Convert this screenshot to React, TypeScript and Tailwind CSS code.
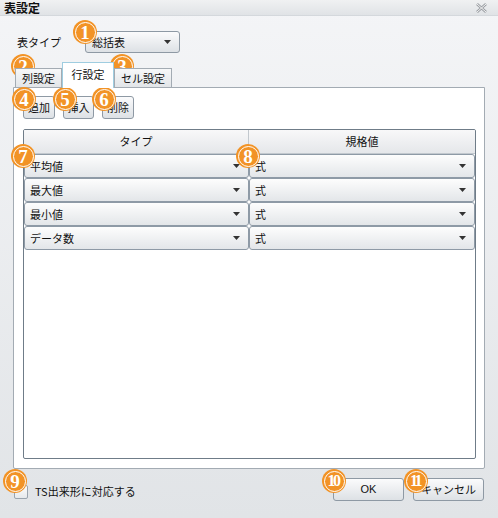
import React from "react";

const FONT = { fontFamily: '"Noto Sans CJK JP", "Noto Sans", sans-serif' };

function Badge({ n, x, y }: { n: string; x: number; y: number }) {
  const two = n.length > 1;
  return (
    <div
      className="absolute w-[24px] h-[24px] rounded-full bg-[#f29326] flex items-center justify-center"
      style={{ left: x - 12, top: y - 12 }}
    >
      <div className="w-[21px] h-[21px] rounded-full border-[1.5px] border-white bg-[#f29326] flex items-center justify-center">
        <span
          className={`text-white font-bold leading-none ${two ? "text-[16px] tracking-[-2.5px] -ml-[2px]" : "text-[19px]"}`}
          style={{ fontFamily: '"Liberation Serif", serif' }}
        >
          {n}
        </span>
      </div>
    </div>
  );
}

function Arrow() {
  return (
    <svg width="7" height="4" viewBox="0 0 7 4" className="shrink-0">
      <path d="M0 0 L7 0 L3.5 4 Z" fill="#333" />
    </svg>
  );
}

function Combo({ text }: { text: string }) {
  return (
    <div className="h-[24px] flex-1 rounded-[3px] border border-[#8e9aa6] bg-gradient-to-b from-[#fdfdfd] to-[#e3e6e9] flex items-center justify-between pl-[5px] pr-[8px] text-[11px] text-[#111]">
      <span>{text}</span>
      <Arrow />
    </div>
  );
}

function Btn({ children, w }: { children: React.ReactNode; w: string }) {
  return (
    <div
      className={`${w} h-[23px] rounded-[3px] border border-[#8e99a4] bg-gradient-to-b from-[#fbfbfc] to-[#dde1e5] flex items-center justify-center text-[11px] text-[#111]`}
    >
      {children}
    </div>
  );
}

export default function App() {
  const rows = ["平均値", "最大値", "最小値", "データ数"];
  return (
    <div
      className="relative w-[498px] h-[518px] overflow-hidden bg-gradient-to-b from-[#f4f5f7] to-[#e1e4e7] text-[#111] flex flex-col"
      style={FONT}
    >
      {/* title bar */}
      <div className="h-[16px] shrink-0 bg-gradient-to-b from-[#f0f1f2] to-[#e0e3e6] border-b border-[#d4d8dc] flex items-center justify-between pl-[4px] pr-[11px]">
        <span className="text-[12px] font-bold leading-none">表設定</span>
        <svg width="11" height="10" viewBox="0 0 11 10">
          <path d="M1 1 L10 9 M10 1 L1 9" stroke="#9a9ea3" strokeWidth="2.6" />
          <path d="M1 1 L10 9 M10 1 L1 9" stroke="#f4f4f4" strokeWidth="1" />
        </svg>
      </div>

      {/* type row */}
      <div className="flex items-center pl-[17px] mt-[15px] h-[22px]">
        <span className="w-[68px] text-[11px]">表タイプ</span>
        <div className="w-[95px] h-[22px] rounded-[3px] border border-[#8e99a4] bg-gradient-to-b from-[#fbfbfc] to-[#dde1e5] flex items-center justify-between pl-[6px] pr-[8px] text-[11px]">
          <span>総括表</span>
          <Arrow />
        </div>
      </div>

      {/* tabs */}
      <div className="flex items-end pl-[15px] mt-[9px] h-[25px] relative z-10">
        <div className="w-[47px] h-[19px] border border-b-0 border-[#a3abb3] bg-gradient-to-b from-[#f7f8f9] to-[#e2e5e8] flex items-center justify-center text-[11px]">
          列設定
        </div>
        <div className="w-[52px] h-[26px] -mb-px border border-b-0 border-[#9fcde0] bg-white flex items-center justify-center text-[11px] pb-[3px]">
          行設定
        </div>
        <div className="w-[58px] h-[19px] border border-b-0 border-[#a3abb3] bg-gradient-to-b from-[#f7f8f9] to-[#e2e5e8] flex items-center justify-center text-[11px]">
          セル設定
        </div>
      </div>

      {/* panel */}
      <div className="ml-[13px] w-[472px] h-[382px] border border-[#a3abb3] rounded-b-[2px] bg-white flex flex-col pl-[9px] pr-[8px] pt-[8px] pb-[9px]">
        <div className="flex gap-[8px]">
          <Btn w="w-[32px]">追加</Btn>
          <Btn w="w-[31px]">挿入</Btn>
          <Btn w="w-[32px]">削除</Btn>
        </div>
        <div className="mt-[10px] flex-1 border border-[#6f7c88] rounded-[2px] flex flex-col overflow-hidden">
          <div className="h-[24px] shrink-0 flex bg-gradient-to-b from-[#f8f8f9] to-[#e5e7ea] border-b border-[#c2c8ce] text-[11px]">
            <div className="w-[225px] flex items-center justify-center border-r border-[#c2c8ce]">タイプ</div>
            <div className="flex-1 flex items-center justify-center">規格値</div>
          </div>
          {rows.map((r) => (
            <div key={r} className="flex">
              <div className="w-[225px] flex">
                <Combo text={r} />
              </div>
              <div className="flex-1 flex">
                <Combo text="式" />
              </div>
            </div>
          ))}
        </div>
      </div>

      {/* bottom row */}
      <div className="flex items-center mt-[9px] h-[23px]">
        <div className="ml-[14px] w-[14px] h-[14px] mt-[4px] rounded-[2px] border border-[#9aa4ae] bg-gradient-to-b from-[#fdfdfd] to-[#e6e9ec]" />
        <span className="ml-[7px] mt-[4px] text-[11px]">TS出来形に対応する</span>
        <div className="ml-auto flex gap-[9px] mr-[14px]">
          <Btn w="w-[71px]">
            <span style={{ fontFamily: '"Liberation Sans", sans-serif' }}>OK</span>
          </Btn>
          <Btn w="w-[71px]">キャンセル</Btn>
        </div>
      </div>

      <Badge n="1" x={85} y={32} />
      <Badge n="2" x={23} y={66} />
      <Badge n="3" x={122} y={66} />
      <Badge n="4" x={24} y={99} />
      <Badge n="5" x={65} y={99} />
      <Badge n="6" x={104} y={99} />
      <Badge n="7" x={23} y={156} />
      <Badge n="8" x={248} y={156} />
      <Badge n="9" x={15} y={481} />
      <Badge n="10" x={334} y={481} />
      <Badge n="11" x={416} y={481} />
    </div>
  );
}
